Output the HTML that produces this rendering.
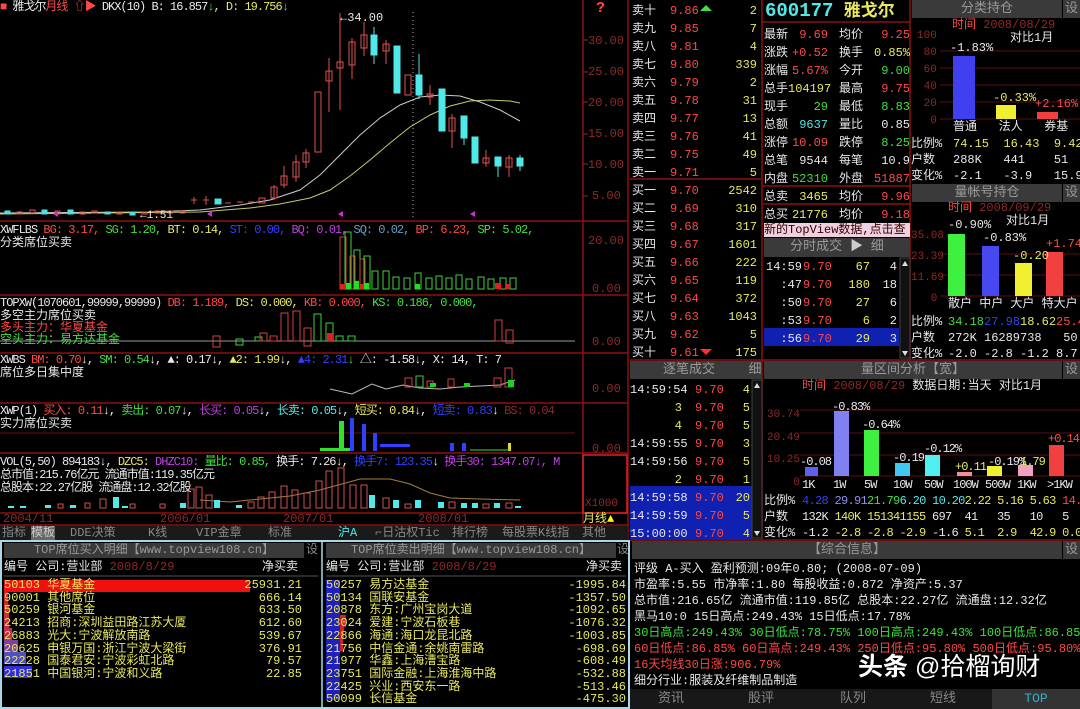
<!DOCTYPE html>
<html><head><meta charset="utf-8">
<style>
*{margin:0;padding:0;box-sizing:border-box}
body{width:1080px;height:709px;background:#000;overflow:hidden;position:relative;font-family:"Liberation Mono","Noto Sans CJK SC",monospace;font-size:12px;color:#ddd}
.t{position:absolute;white-space:nowrap;line-height:14px}
.r{color:#ff4848}.g{color:#40e040}.y{color:#e8e860}.c{color:#50e8e8}.w{color:#e8e8e8}.b{color:#3040ff}.m{color:#c040e0}.dr{color:#902828}.gr{color:#888}
.hd{position:absolute;background:#3a3a3a;color:#999;text-align:center;font-size:13px;line-height:18px}
.ra{text-align:right}
.ls{letter-spacing:-1px}
.tb{position:absolute;top:0px}
</style></head><body>

<svg width="1080" height="709" style="position:absolute;left:0px;top:0px">
<g stroke="#8a1010" stroke-width="1.5" fill="none">
<line x1="0" y1="221" x2="628" y2="221"/><line x1="0" y1="295" x2="628" y2="295"/>
<line x1="0" y1="353" x2="628" y2="353"/><line x1="0" y1="403" x2="628" y2="403"/>
<line x1="0" y1="453" x2="628" y2="453"/><line x1="0" y1="513" x2="628" y2="513"/>
<line x1="0" y1="525" x2="628" y2="525"/>
<line x1="583" y1="0" x2="583" y2="525"/><line x1="628" y1="0" x2="628" y2="540"/>
<rect x="583" y="455" width="44" height="58" stroke="#e02020"/>
<line x1="762" y1="0" x2="762" y2="540"/><line x1="910" y1="0" x2="910" y2="360"/>
<line x1="630" y1="179" x2="762" y2="179"/><line x1="630" y1="360" x2="1080" y2="360"/>
<line x1="762" y1="22" x2="910" y2="22"/><line x1="762" y1="186" x2="910" y2="186"/><line x1="762" y1="204" x2="910" y2="204"/>
<line x1="630" y1="540" x2="1080" y2="540"/>
</g>
<g stroke="#902828"><line x1="583" y1="40" x2="588" y2="40"/><line x1="583" y1="72" x2="588" y2="72"/><line x1="583" y1="102" x2="588" y2="102"/><line x1="583" y1="134" x2="588" y2="134"/><line x1="583" y1="164" x2="588" y2="164"/><line x1="583" y1="196" x2="588" y2="196"/></g>
<line x1="413" y1="12" x2="413" y2="220" stroke="#aaa" stroke-dasharray="1,3"/>
<polyline fill="none" stroke="#ccc" stroke-width="1" points="0,213 150,212 200,210 240,205 270,200 300,190 320,175 340,155 360,135 380,118 400,105 420,97 440,95 460,96 480,102 500,110 520,121"/>
<polyline fill="none" stroke="#c8c870" stroke-width="1" points="0,214 200,212 250,208 280,204 310,198 330,190 350,176 370,160 390,143 410,127 430,115 450,106 470,101 490,100 510,101 520,103"/>
<g stroke="#e05050" fill="none">
<rect x="5" y="211" width="5" height="3" stroke="#50e0e0" fill="#50e0e0"/><rect x="17" y="212" width="5" height="2"/><rect x="30" y="210" width="5" height="3"/><rect x="42" y="210" width="5" height="4" fill="#50e0e0" stroke="#50e0e0"/><rect x="55" y="211" width="5" height="3"/><rect x="68" y="210" width="5" height="4" fill="#50e0e0" stroke="#50e0e0"/><rect x="80" y="212" width="5" height="2"/><rect x="92" y="211" width="5" height="2"/><rect x="105" y="212" width="5" height="2" fill="#50e0e0" stroke="#50e0e0"/><rect x="117" y="212" width="5" height="2"/><rect x="130" y="212" width="5" height="3" fill="#50e0e0" stroke="#50e0e0"/><rect x="142" y="212" width="5" height="2"/><rect x="155" y="211" width="5" height="2"/><rect x="168" y="211" width="5" height="2"/><rect x="180" y="211" width="5" height="2"/>
<line x1="194" y1="197" x2="194" y2="204"/><line x1="191" y1="200" x2="197" y2="200"/>
<line x1="206" y1="196" x2="206" y2="205"/><line x1="203" y1="200" x2="209" y2="200"/>
<rect x="215" y="199" width="6" height="5" fill="#50e0e0" stroke="#50e0e0"/>
<line x1="225" y1="203" x2="231" y2="203"/><line x1="237" y1="202" x2="243" y2="202"/><line x1="248" y1="202" x2="254" y2="202"/>
<rect x="259" y="198" width="6" height="5"/><rect x="271" y="187" width="6" height="11"/><line x1="274" y1="185" x2="274" y2="200"/>
<rect x="281" y="176" width="6" height="9"/><line x1="284" y1="166" x2="284" y2="188"/>
<rect x="293" y="162" width="6" height="15"/><line x1="296" y1="155" x2="296" y2="182"/>
<rect x="303" y="153" width="6" height="9"/><line x1="306" y1="149" x2="306" y2="168"/>
<rect x="315" y="92" width="6" height="60"/>
<rect x="326" y="71" width="6" height="10"/><line x1="329" y1="58" x2="329" y2="112"/>
<rect x="337" y="62" width="6" height="6"/><line x1="340" y1="13" x2="340" y2="110"/>
<rect x="349" y="42" width="6" height="23"/><line x1="352" y1="38" x2="352" y2="79"/>
<rect x="361" y="35" width="6" height="13"/><line x1="364" y1="22" x2="364" y2="56"/>
<rect x="383" y="44" width="6" height="7"/><line x1="386" y1="40" x2="386" y2="64"/>
<rect x="405" y="75" width="6" height="20"/>
<rect x="427" y="94" width="6" height="3"/><line x1="430" y1="85" x2="430" y2="105"/>
<rect x="449" y="118" width="6" height="13"/><line x1="452" y1="114" x2="452" y2="148"/>
<rect x="483" y="158" width="6" height="5"/><line x1="486" y1="150" x2="486" y2="167"/>
<rect x="506" y="158" width="6" height="9"/><line x1="509" y1="155" x2="509" y2="177"/>
</g>
<g fill="#50e8e8" stroke="#50e8e8">
<rect x="371" y="35" width="6" height="20"/><line x1="374" y1="27" x2="374" y2="64"/>
<rect x="394" y="46" width="6" height="47"/>
<rect x="416" y="75" width="6" height="20"/><line x1="419" y1="54" x2="419" y2="99"/>
<rect x="439" y="89" width="6" height="42"/>
<rect x="461" y="116" width="6" height="22"/><line x1="464" y1="116" x2="464" y2="145"/>
<rect x="472" y="137" width="6" height="26"/>
<rect x="495" y="157" width="6" height="9"/><line x1="498" y1="157" x2="498" y2="177"/>
<rect x="517" y="158" width="6" height="8"/><line x1="520" y1="155" x2="520" y2="171"/>
</g>
<g fill="#d030d0"><polygon points="53,214 58,211 58,217"/><polygon points="207,214 212,211 212,217"/><polygon points="338,214 343,211 343,217"/><polygon points="470,214 475,211 475,217"/></g>
<g fill="none" stroke="#40d040">
<rect x="340" y="237" width="6" height="52" stroke="#d04040"/><rect x="345" y="232" width="6" height="57"/>
<rect x="350" y="256" width="5" height="33" stroke="#d04040"/><rect x="354" y="250" width="6" height="39"/>
<rect x="360" y="259" width="5" height="30" stroke="#d04040"/><rect x="364" y="256" width="6" height="33"/>
<rect x="372" y="271" width="6" height="18"/><rect x="383" y="271" width="6" height="18"/><rect x="393" y="277" width="6" height="12"/><rect x="404" y="278" width="6" height="11"/><rect x="415" y="273" width="6" height="16"/><rect x="426" y="278" width="6" height="11"/><rect x="436" y="276" width="6" height="13"/><rect x="446" y="278" width="6" height="11"/><rect x="456" y="275" width="6" height="14"/><rect x="466" y="279" width="6" height="10"/><rect x="478" y="277" width="6" height="12"/><rect x="488" y="279" width="6" height="10"/><rect x="500" y="278" width="6" height="11"/><rect x="510" y="278" width="6" height="11"/>
</g>
<g fill="#e02020"><rect x="340" y="284" width="6" height="5"/><rect x="360" y="284" width="5" height="5"/><rect x="495" y="283" width="6" height="6"/><rect x="505" y="284" width="5" height="5"/></g>
<g fill="#20e020"><rect x="346" y="283" width="5" height="6"/><rect x="354" y="281" width="5" height="8"/><rect x="364" y="283" width="5" height="6"/><rect x="415" y="284" width="5" height="5"/></g>
<line x1="0" y1="341" x2="575" y2="341" stroke="#999"/>
<g fill="none" stroke="#d04040">
<rect x="213" y="336" width="7" height="11"/><rect x="255" y="337" width="7" height="4" stroke="#40d040"/><rect x="236" y="339" width="7" height="6" stroke="#40d040"/><rect x="260" y="333" width="7" height="8"/><rect x="270" y="336" width="7" height="5"/>
<rect x="281" y="313" width="7" height="28"/><rect x="293" y="311" width="7" height="30"/><rect x="304" y="328" width="7" height="18"/>
<rect x="314" y="314" width="7" height="27" stroke="#40d040"/><rect x="326" y="323" width="7" height="18" stroke="#40d040"/><rect x="336" y="336" width="7" height="5" stroke="#40d040"/><rect x="348" y="336" width="7" height="5" stroke="#40d040"/>
<rect x="495" y="320" width="7" height="21"/><rect x="506" y="330" width="7" height="13"/>
</g>
<rect x="327" y="333" width="6" height="8" fill="#e02020"/>
<polyline fill="none" stroke="#bbb" points="330,389 352,394 372,384 386,389 403,385 420,388 440,389 460,387 480,386 500,385 515,380"/>
<g fill="none" stroke="#d04040"><rect x="405" y="378" width="7" height="9"/><rect x="416" y="376" width="7" height="11" stroke="#40d040"/><rect x="427" y="381" width="6" height="6"/><rect x="448" y="379" width="6" height="8"/><rect x="494" y="378" width="7" height="9"/><rect x="505" y="368" width="7" height="19"/></g>
<g fill="#20d020"><rect x="430" y="383" width="6" height="4"/><rect x="464" y="383" width="6" height="4"/><rect x="508" y="380" width="6" height="7"/></g>
<line x1="0" y1="433" x2="575" y2="433" stroke="#6a1010"/>
<g fill="#30e030"><rect x="339" y="421" width="5" height="30"/><rect x="320" y="448" width="30" height="3"/></g>
<g fill="#3040ff"><rect x="350" y="418" width="4" height="33"/><rect x="362" y="424" width="4" height="27"/><rect x="373" y="433" width="4" height="18"/><rect x="380" y="444" width="30" height="3"/><rect x="450" y="443" width="4" height="8"/><rect x="462" y="443" width="4" height="8"/></g>
<rect x="508" y="443" width="3" height="8" fill="#e0e020"/>
<line x1="470" y1="450" x2="510" y2="450" stroke="#30e030"/>
<polyline fill="none" stroke="#a08040" points="200,500 230,502 260,499 290,496 320,490 360,479 390,479 410,484 430,493 450,498 480,499 520,500"/>
<g fill="none" stroke="#d05050">
<rect x="58" y="504" width="5" height="4"/><rect x="85" y="503" width="5" height="5"/><rect x="100" y="499" width="6" height="9"/><rect x="130" y="504" width="5" height="4"/><rect x="160" y="504" width="5" height="4"/>
<rect x="188" y="489" width="6" height="19"/><rect x="196" y="487" width="6" height="21"/><rect x="206" y="495" width="6" height="13"/>
<rect x="248" y="502" width="6" height="6"/><rect x="258" y="497" width="6" height="11"/><rect x="269" y="492" width="6" height="16"/><rect x="281" y="486" width="6" height="22"/><rect x="292" y="490" width="6" height="18"/><rect x="304" y="493" width="6" height="15"/>
<rect x="316" y="481" width="6" height="27"/><rect x="326" y="471" width="6" height="37"/><rect x="338" y="468" width="6" height="40"/><rect x="350" y="485" width="6" height="23"/><rect x="361" y="485" width="6" height="23"/>
<rect x="383" y="498" width="6" height="10"/><rect x="405" y="504" width="6" height="4"/><rect x="449" y="502" width="6" height="6"/><rect x="483" y="504" width="6" height="4"/><rect x="506" y="503" width="6" height="5"/>
</g>
<g fill="#50e8e8"><rect x="8" y="506" width="6" height="2"/><rect x="20" y="506" width="6" height="2"/><rect x="45" y="505" width="6" height="3"/><rect x="70" y="505" width="6" height="3"/><rect x="113" y="497" width="6" height="11"/><rect x="122" y="506" width="6" height="2"/><rect x="180" y="503" width="6" height="5"/><rect x="214" y="500" width="6" height="8"/><rect x="236" y="505" width="6" height="3"/><rect x="369" y="495" width="6" height="13"/><rect x="393" y="500" width="6" height="8"/><rect x="415" y="500" width="6" height="8"/><rect x="438" y="502" width="6" height="6"/><rect x="461" y="503" width="6" height="5"/><rect x="472" y="503" width="6" height="5"/><rect x="494" y="503" width="6" height="5"/><rect x="515" y="506" width="6" height="2"/></g>
<g stroke="#5a1010"><line x1="940" y1="51" x2="1080" y2="51"/><line x1="940" y1="68" x2="1080" y2="68"/><line x1="940" y1="85" x2="1080" y2="85"/><line x1="940" y1="102" x2="1080" y2="102"/><line x1="940" y1="119" x2="1080" y2="119"/>
<line x1="940" y1="254" x2="1080" y2="254"/><line x1="940" y1="275" x2="1080" y2="275"/><line x1="940" y1="296" x2="1080" y2="296"/>
<line x1="800" y1="410" x2="1080" y2="410"/><line x1="800" y1="433" x2="1080" y2="433"/><line x1="800" y1="455" x2="1080" y2="455"/><line x1="800" y1="476" x2="1080" y2="476"/></g>
<rect x="953" y="56" width="22" height="63" fill="#4040f0"/><rect x="996" y="105" width="20" height="14" fill="#f0f030"/><rect x="1037" y="112" width="21" height="7" fill="#f04040"/>
<rect x="948" y="234" width="17" height="62" fill="#40f040"/><rect x="982" y="246" width="17" height="50" fill="#4848f0"/><rect x="1015" y="263" width="17" height="33" fill="#f0f030"/><rect x="1046" y="252" width="17" height="44" fill="#f04040"/>
<rect x="805" y="467" width="13" height="9" fill="#6060f0"/><rect x="834" y="411" width="15" height="65" fill="#8080f0"/><rect x="864" y="430" width="15" height="46" fill="#40f040"/><rect x="895" y="463" width="15" height="13" fill="#40c8f0"/><rect x="925" y="455" width="15" height="21" fill="#50f0f0"/><rect x="957" y="472" width="15" height="4" fill="#f09090"/><rect x="987" y="466" width="15" height="10" fill="#f0f030"/><rect x="1018" y="465" width="15" height="11" fill="#f0a0c0"/><rect x="1049" y="445" width="15" height="31" fill="#f04040"/>
<rect x="764" y="328" width="135" height="18" fill="#1020b0"/>
<rect x="630" y="486" width="122" height="54" fill="#1020b0"/>
<rect x="900" y="258" width="10" height="100" fill="#111" stroke="#444"/><polygon points="905,261 902,266 908,266" fill="#ddd"/><polygon points="905,356 902,351 908,351" fill="#ddd"/>
<rect x="752" y="380" width="10" height="158" fill="#111" stroke="#444"/><polygon points="757,383 754,388 760,388" fill="#ddd"/><polygon points="757,536 754,531 760,531" fill="#ddd"/>
<polygon points="706,5 700,11 712,11" fill="#40e040"/><polygon points="706,355 700,349 712,349" fill="#ff3030"/>
<rect x="1" y="541" width="628" height="167" fill="none" stroke="#a8d8e8" stroke-width="2"/>
<line x1="322" y1="541" x2="322" y2="708" stroke="#a8d8e8" stroke-width="1.5"/>
<rect x="4" y="580" width="246" height="12" fill="#f01010"/>
<rect x="4" y="592" width="4" height="12" fill="#d02020"/><rect x="4" y="604" width="5" height="12" fill="#d03030"/><rect x="4" y="616" width="5" height="12" fill="#c03040"/><rect x="4" y="628" width="8" height="12" fill="#c03050"/><rect x="4" y="640" width="14" height="12" fill="#8040a0"/><rect x="4" y="652" width="22" height="12" fill="#5050c0"/><rect x="4" y="666" width="28" height="12" fill="#3030e0"/>
<rect x="326" y="580" width="14" height="120" fill="#2020c0"/><rect x="340" y="615" width="6" height="12" fill="#d02020"/><rect x="340" y="627" width="4" height="12" fill="#d02020"/><rect x="340" y="639" width="3" height="12" fill="#d02020"/>
<line x1="4" y1="576" x2="318" y2="576" stroke="#555"/><line x1="326" y1="576" x2="626" y2="576" stroke="#555"/>
</svg>

<div class="t ls" style="left:0px;top:0px"><span class="r">■</span> <span class="w">雅戈尔</span><span class="r">月线 ⇧▶</span> <span class="w">DKX(10)</span> <span class="w">B: 16.857</span><span class="g">↓</span><span class="y">, D: 19.756</span><span class="g">↓</span></div>
<div class="t r" style="left:596px;top:2px;font-size:15px;font-weight:bold">?</div>
<div class="t w" style="left:340px;top:11px">←34.00</div>
<div class="t w" style="left:140px;top:209px;font-size:11px">←1.51</div>
<div class="t dr" style="left:588px;top:34px">30.00</div><div class="t dr" style="left:588px;top:65px">25.00</div><div class="t dr" style="left:588px;top:96px">20.00</div><div class="t dr" style="left:588px;top:127px">15.00</div><div class="t dr" style="left:588px;top:158px">10.00</div><div class="t dr" style="left:592px;top:189px">5.00</div>
<div class="t ls" style="left:0px;top:223px"><span class="w">XWFLBS</span> <span class="r">BG: 3.17,</span> <span class="g">SG: 1.20,</span> <span class="y">BT: 0.14,</span> <span class="b">ST: 0.00,</span> <span class="m">BQ: 0.01,</span> <span style="color:#60a0c0">SQ: 0.02,</span> <span class="r">BP: 6.23,</span> <span class="g">SP: 5.02,</span></div>
<div class="t w" style="left:0px;top:236px">分类席位买卖</div>
<div class="t dr" style="left:588px;top:234px">20.00</div><div class="t dr" style="left:592px;top:282px">0.00</div>
<div class="t ls" style="left:0px;top:296px"><span class="w">TOPXW(1070601,99999,99999)</span> <span class="r">DB: 1.189,</span> <span class="y">DS: 0.000,</span> <span class="r">KB: 0.000,</span> <span class="g">KS: 0.186, 0.000,</span></div>
<div class="t w" style="left:0px;top:309px">多空主力席位买卖</div>
<div class="t r" style="left:0px;top:321px">多头主力：华夏基金</div>
<div class="t g" style="left:0px;top:333px">空头主力：易方达基金</div>
<div class="t dr" style="left:592px;top:335px">0.00</div>
<div class="t ls" style="left:0px;top:353px"><span class="w">XWBS</span> <span class="r">BM: 0.70</span><span class="w">↓,</span> <span class="g">SM: 0.54</span><span class="w">↓, ▲: 0.17↓,</span> <span class="y">▲2: 1.99</span><span class="w">↓,</span> <span class="b">▲4: 2.31</span><span class="g">↓</span> <span class="w">△: -1.58↓, X: 14, T: 7</span></div>
<div class="t w" style="left:0px;top:366px">席位多日集中度</div>
<div class="t dr" style="left:592px;top:382px">0.00</div>
<div class="t ls" style="left:0px;top:404px"><span class="w">XWP(1)</span> <span class="r">买入: 0.11</span><span class="w">↓,</span> <span class="g">卖出: 0.07</span><span class="w">↓,</span> <span class="m">长买: 0.05</span><span class="w">↓,</span> <span class="c">长卖: 0.05</span><span class="w">↓,</span> <span class="y">短买: 0.84</span><span class="w">↓,</span> <span class="b">短卖: 0.83</span><span class="w">↓</span> <span class="dr">BS: 0.04</span></div>
<div class="t w" style="left:0px;top:417px">实力席位买卖</div>
<div class="t dr" style="left:592px;top:442px">0.00</div>
<div class="t ls" style="left:0px;top:455px;width:582px;overflow:hidden"><span class="w">VOL(5,50) 894183↓,</span> <span class="y">DZC5:</span> <span class="m">DHZC10:</span> <span class="g">量比: 0.85,</span> <span class="w">换手: 7.26↓,</span> <span class="b">换手7: 123.35</span><span class="w">↓</span> <span class="m">换手30: 1347.07↓, M</span></div>
<div class="t w ls" style="left:0px;top:468px">总市值:215.76亿元 流通市值:119.35亿元</div>
<div class="t w ls" style="left:0px;top:481px">总股本:22.27亿股 流通盘:12.32亿股</div>
<div class="t dr" style="left:585px;top:497px;font-size:11px">X1000</div>
<div class="t dr" style="left:3px;top:512px">2004/11</div><div class="t dr" style="left:160px;top:512px">2006/01</div><div class="t dr" style="left:283px;top:512px">2007/01</div><div class="t dr" style="left:418px;top:512px">2008/01</div>
<div class="t y" style="left:583px;top:512px">月线<span style="color:#ff0">▲</span></div>
<div class="t gr" style="left:0px;top:526px;width:628px;background:#1a1a1a;height:14px"><span class="tb" style="left:2px">指标</span><span class="tb" style="left:31px;background:#666;color:#ccc">模板</span><span class="tb" style="left:70px">DDE决策</span><span class="tb" style="left:148px">K线</span><span class="tb" style="left:196px">VIP金章</span><span class="tb" style="left:268px">标准</span><span class="tb c" style="left:338px">沪A</span><span class="tb" style="left:375px">⌐日沽权Tic</span><span class="tb" style="left:452px">排行榜</span><span class="tb" style="left:502px">每股票K线指</span><span class="tb" style="left:582px">其他</span></div>

<div class="hd" style="left:4px;top:543px;width:300px;height:15px;line-height:15px;font-size:12px">TOP席位买入明细【www.topview108.cn】</div><div class="t gr" style="left:306px;top:543px">设</div>
<div class="hd" style="left:326px;top:543px;width:290px;height:15px;line-height:15px;font-size:12px">TOP席位卖出明细【www.topview108.cn】</div><div class="t gr" style="left:617px;top:543px">设</div>
<div class="t w" style="left:4px;top:560px">编号  公司:营业部  <span class="dr">2008/8/29</span></div><div class="t w" style="left:262px;top:560px">净买卖</div>
<div class="t w" style="left:326px;top:560px">编号  公司:营业部  <span class="dr">2008/8/29</span></div><div class="t w" style="left:586px;top:560px">净买卖</div>
<div class="t y" style="left:4px;top:579px;line-height:12.7px">50103 华夏基金<br>90001 其他席位<br>50259 银河基金<br>24213 招商:深圳益田路江苏大厦<br>26883 光大:宁波解放南路<br>20625 申银万国:浙江宁波大梁街<br>22228 国泰君安:宁波彩虹北路<br>21851 中国银河:宁波和义路</div>
<div class="t y ra" style="left:230px;top:579px;width:72px;line-height:12.7px">25931.21<br>666.14<br>633.50<br>612.60<br>539.67<br>376.91<br>79.57<br>22.85</div>
<div class="t y" style="left:326px;top:579px;line-height:12.7px">50257 易方达基金<br>50134 国联安基金<br>20878 东方:广州宝岗大道<br>23024 爱建:宁波石板巷<br>22866 海通:海口龙昆北路<br>21756 中信金通:余姚南雷路<br>21977 华鑫:上海漕宝路<br>23751 国际金融:上海淮海中路<br>22425 兴业:西安东一路<br>50099 长信基金</div>
<div class="t y ra" style="left:540px;top:579px;width:86px;line-height:12.7px">-1995.84<br>-1357.50<br>-1092.65<br>-1076.32<br>-1003.85<br>-698.69<br>-608.49<br>-532.88<br>-513.46<br>-475.30</div>

<div class="t w" style="left:632px;top:2px;line-height:18px">卖十<br>卖九<br>卖八<br>卖七<br>卖六<br>卖五<br>卖四<br>卖三<br>卖二<br>卖一<br>买一<br>买二<br>买三<br>买四<br>买五<br>买六<br>买七<br>买八<br>买九<br>买十</div>
<div class="t r" style="left:670px;top:2px;line-height:18px">9.86<br>9.85<br>9.81<br>9.80<br>9.79<br>9.78<br>9.77<br>9.76<br>9.75<br>9.71<br>9.70<br>9.69<br>9.68<br>9.67<br>9.66<br>9.65<br>9.64<br>9.63<br>9.62<br>9.61</div>
<div class="t y ra" style="left:715px;top:2px;width:42px;line-height:18px">2<br>7<br>4<br>339<br>2<br>31<br>13<br>41<br>49<br>5<br>2542<br>310<br>317<br>1601<br>222<br>119<br>372<br>1043<br>5<br>175</div>

<div class="t" style="left:765px;top:1px;font-size:19px;line-height:20px;font-weight:bold"><span class="c">600177</span><span class="y" style="font-size:17px"> 雅戈尔</span></div>
<div class="t w" style="left:764px;top:26px;line-height:18px">最新<br>涨跌<br>涨幅<br>总手<br>现手<br>总额<br>涨停<br>总笔<br>内盘<br>总卖<br>总买</div>
<div class="t ra" style="left:788px;top:26px;width:40px;line-height:18px"><span class="r">9.69</span><br><span class="r">+0.52</span><br><span class="r">5.67%</span><br><span class="y">104197</span><br><span class="g">29</span><br><span class="c">9637</span><br><span class="r">10.09</span><br><span class="w">9544</span><br><span class="g">52310</span><br><span class="y">3465</span><br><span class="y">21776</span></div>
<div class="t w" style="left:839px;top:26px;line-height:18px">均价<br>换手<br>今开<br>最高<br>最低<br>量比<br>跌停<br>每笔<br>外盘<br>均价<br>均价</div>
<div class="t ra" style="left:866px;top:26px;width:44px;line-height:18px"><span class="r">9.25</span><br><span class="y">0.85%</span><br><span class="g">9.00</span><br><span class="r">9.75</span><br><span class="g">8.83</span><br><span class="w">0.85</span><br><span class="g">8.25</span><br><span class="w">10.9</span><br><span class="r">51887</span><br><span class="r">9.96</span><br><span class="r">9.18</span></div>
<div class="t" style="left:764px;top:223px;width:146px;height:14px;background:#f0d0e0;color:#300;font-size:12px;overflow:hidden">新的TopView数据,点击查</div>
<div class="hd" style="left:764px;top:238px;width:146px;height:19px;font-size:13px">分时成交 <span style="color:#ccc">▶</span> 细</div>
<div class="t w" style="left:766px;top:258px;line-height:18px">14:59<br>&nbsp;&nbsp;:47<br>&nbsp;&nbsp;:50<br>&nbsp;&nbsp;:53<br>&nbsp;&nbsp;:56</div>
<div class="t r" style="left:803px;top:258px;line-height:18px">9.70<br>9.70<br>9.70<br>9.70<br>9.70</div>
<div class="t y ra" style="left:840px;top:258px;width:30px;line-height:18px">67<br>180<br>27<br>6<br>29</div>
<div class="t w ra" style="left:875px;top:258px;width:22px;line-height:18px">4<br>18<br>6<br>2<br>3</div>

<div class="hd" style="left:912px;top:0px;width:150px;height:18px">分类持仓</div><div class="hd" style="left:1063px;top:0px;width:17px;height:18px">设</div>
<div class="t r" style="left:952px;top:18px">时间 <span class="dr">2008/08/29</span></div>
<div class="t w" style="left:1010px;top:31px">对比1月</div>
<div class="t dr" style="left:917px;top:28px;font-size:11px;line-height:17px">100<br>&nbsp;80<br>&nbsp;60<br>&nbsp;40<br>&nbsp;20<br>&nbsp;&nbsp;0</div>
<div class="t w" style="left:950px;top:41px">-1.83%</div><div class="t y" style="left:993px;top:91px">-0.33%</div><div class="t r" style="left:1035px;top:97px">+2.16%</div>
<div class="t w" style="left:953px;top:120px">普通&nbsp;&nbsp;&nbsp;法人&nbsp;&nbsp;&nbsp;券基</div>
<div class="t w" style="left:911px;top:136px;line-height:16px">比例%<br>户数<br>变化%</div>
<div class="t y" style="left:953px;top:136px;line-height:16px">74.15&nbsp;&nbsp;16.43&nbsp;&nbsp;9.42<br><span class="w">288K&nbsp;&nbsp;&nbsp;441&nbsp;&nbsp;&nbsp;&nbsp;51</span><br><span class="w">-2.1&nbsp;&nbsp;&nbsp;-3.9&nbsp;&nbsp;&nbsp;15.9</span></div>
<div class="hd" style="left:912px;top:184px;width:150px;height:18px">量帐号持仓</div><div class="hd" style="left:1063px;top:184px;width:17px;height:18px">设</div>
<div class="t r" style="left:948px;top:201px">时间 <span class="dr">2008/09/29</span></div>
<div class="t w" style="left:1006px;top:214px">对比1月</div>
<div class="t dr" style="left:911px;top:226px;font-size:11px;line-height:21px">35.08<br>23.39<br>11.69<br>&nbsp;&nbsp;&nbsp;0</div>
<div class="t w" style="left:948px;top:218px">-0.90%</div><div class="t w" style="left:983px;top:231px">-0.83%</div><div class="t y" style="left:1013px;top:249px">-0.20</div><div class="t r" style="left:1046px;top:237px">+1.74</div>
<div class="t w" style="left:948px;top:297px">散户 中户 大户 特大户</div>
<div class="t w" style="left:911px;top:314px;line-height:16px">比例%<br>户数<br>变化%</div>
<div class="t" style="left:948px;top:314px;line-height:16px"><span class="g">34.18</span><span class="b">27.98</span><span class="y">18.62</span><span class="r">25.41</span><br><span class="w">272K 16289738&nbsp;&nbsp;&nbsp;50</span><br><span class="w">-2.0 -2.8 -1.2 8.7</span></div>

<div class="hd" style="left:630px;top:361px;width:118px;height:18px">逐笔成交</div><div class="hd" style="left:748px;top:361px;width:14px;height:18px">细</div>
<div class="t w ra" style="left:630px;top:381px;width:52px;line-height:18px">14:59:54<br><span class="y">3</span><br><span class="y">4</span><br>14:59:55<br>14:59:56<br><span class="y">2</span><br>14:59:58<br>14:59:59<br>15:00:00</div>
<div class="t r" style="left:695px;top:381px;line-height:18px">9.70<br>9.70<br>9.70<br>9.70<br>9.70<br>9.70<br>9.70<br>9.70<br>9.70</div>
<div class="t y ra" style="left:728px;top:381px;width:22px;line-height:18px">4<br>5<br>5<br>3<br>5<br>1<br>20<br>5<br>4</div>

<div class="hd" style="left:764px;top:361px;width:298px;height:18px">量区间分析【宽】</div><div class="hd" style="left:1063px;top:361px;width:17px;height:18px">设</div>
<div class="t r" style="left:802px;top:379px">时间 <span class="dr">2008/08/29</span> <span class="w">数据日期:当天 对比1月</span></div>
<div class="t dr" style="left:767px;top:404px;font-size:11px;line-height:22.5px">30.74<br>20.49<br>10.25<br>&nbsp;&nbsp;&nbsp;&nbsp;0</div>
<div class="t w ls" style="left:800px;top:455px">-0.08</div><div class="t w ls" style="left:832px;top:400px">-0.83%</div><div class="t w ls" style="left:862px;top:418px">-0.64%</div><div class="t w ls" style="left:893px;top:451px">-0.19</div><div class="t w ls" style="left:924px;top:442px">-0.12%</div><div class="t y ls" style="left:955px;top:460px">+0.11</div><div class="t w ls" style="left:988px;top:455px">-0.19%</div><div class="t y ls" style="left:1020px;top:455px">1.79</div><div class="t r ls" style="left:1048px;top:432px">+0.14</div>
<div class="t w ls" style="left:802px;top:478px">1K</div><div class="t w ls" style="left:833px;top:478px">1W</div><div class="t w ls" style="left:864px;top:478px">5W</div><div class="t w ls" style="left:893px;top:478px">10W</div><div class="t w ls" style="left:924px;top:478px">50W</div><div class="t w ls" style="left:953px;top:478px">100W</div><div class="t w ls" style="left:985px;top:478px">500W</div><div class="t w ls" style="left:1017px;top:478px">1KW</div><div class="t w ls" style="left:1047px;top:478px">&gt;1KW</div>
<div class="t w" style="left:764px;top:493px;line-height:16px">比例%<br>户数<br>变化%</div>
<div class="t" style="left:802px;top:493px;line-height:16px;letter-spacing:-0.7px"><span class="b">4.28</span> <span style="color:#9090f0">29.91</span><span class="g">21.79</span><span class="c">6.20</span> <span class="c">10.20</span><span class="y">2.22 5.16 5.63</span> <span class="r">14.62</span><br><span class="w">132K </span><span class="y">140K 151341155</span><span class="w"> 697&nbsp;&nbsp;41&nbsp;&nbsp;&nbsp;35&nbsp;&nbsp;&nbsp;10&nbsp;&nbsp;&nbsp;5</span><br><span class="w">-1.2 </span><span class="y">-2.8 -2.8 -2.9</span><span class="w"> -1.6 </span><span class="y">5.1&nbsp;&nbsp;2.9&nbsp;&nbsp;42.9 0.0</span></div>

<div class="hd" style="left:632px;top:541px;width:430px;height:18px">【综合信息】</div><div class="hd" style="left:1063px;top:541px;width:17px;height:18px">设</div>
<div class="t w" style="left:634px;top:561px;line-height:16px">评级 A-买入 盈利预测:09年0.80; (2008-07-09)<br>市盈率:5.55 市净率:1.80 每股收益:0.872 净资产:5.37<br>总市值:216.65亿 流通市值:119.85亿 总股本:22.27亿 流通盘:12.32亿<br>黑马10:0 15日高点:249.43% 15日低点:17.78%<br><span class="g">30日高点:249.43% 30日低点:78.75% 100日高点:249.43% 100日低点:86.85%</span><br><span class="r">60日低点:86.85% 60日高点:249.43% 250日低点:95.80% 500日低点:95.80%</span><br><span class="r">16天均线30日涨:906.79%</span><br>细分行业:服装及纤维制品制造</div>
<div class="t" style="left:858px;top:652px;font-size:25px;line-height:30px;color:#fff;font-family:'Liberation Sans','Noto Sans CJK SC',sans-serif"><b>头条</b> @拾榴询财</div>
<div class="t gr" style="left:630px;top:689px;width:450px;height:20px;line-height:20px;background:#181818;font-size:13px"><span style="position:absolute;left:28px">资讯</span><span style="position:absolute;left:118px">股评</span><span style="position:absolute;left:210px">队列</span><span style="position:absolute;left:300px">短线</span><span style="position:absolute;left:362px;width:88px;background:#333;text-align:center;color:#30b0d0">TOP</span></div>
</body></html>
